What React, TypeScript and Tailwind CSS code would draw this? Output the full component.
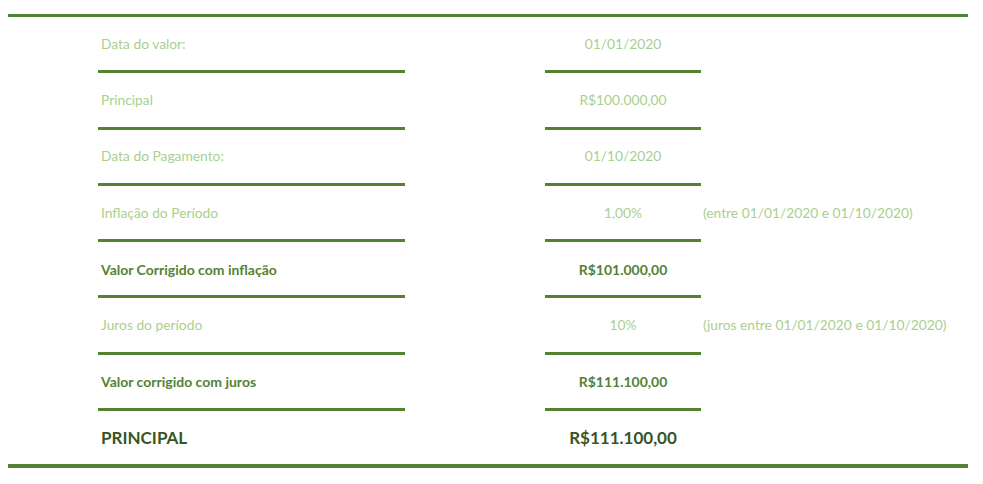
import React from 'react';

interface Row {
  label: string;
  value: string;
  note?: string;
  kind: 'light' | 'bold' | 'total';
}

const rows: Row[] = [
  { label: 'Data do valor:', value: '01/01/2020', kind: 'light' },
  { label: 'Principal', value: 'R$100.000,00', kind: 'light' },
  { label: 'Data do Pagamento:', value: '01/10/2020', kind: 'light' },
  { label: 'Inflação do Período', value: '1,00%', note: '(entre 01/01/2020 e 01/10/2020)', kind: 'light' },
  { label: 'Valor Corrigido com inflação', value: 'R$101.000,00', kind: 'bold' },
  { label: 'Juros do período', value: '10%', note: '(juros entre 01/01/2020 e 01/10/2020)', kind: 'light' },
  { label: 'Valor corrigido com juros', value: 'R$111.100,00', kind: 'bold' },
  { label: 'PRINCIPAL', value: 'R$111.100,00', kind: 'total' },
];

const textClass = (kind: Row['kind']) =>
  kind === 'light'
    ? 'text-[#a9d08e] text-[13.8px]'
    : kind === 'bold'
    ? 'text-[#548235] text-[14px] font-bold'
    : 'text-[#375623] text-[17px] font-bold';

const App: React.FC = () => {
  return (
    <div className="w-[983px] h-[484px] bg-white pt-[14px] px-[8px]" style={{ fontFamily: 'Lato, "Open Sans", sans-serif' }}>
      <div className="w-[960px]">
        <div className="h-[3px] bg-[#548235]" />
        {rows.map((row, i) => {
          const last = i === rows.length - 1;
          const line = last ? '' : 'border-b-[3px] border-[#548235]';
          return (
            <div key={i} className="flex">
              <div className={`ml-[90px] w-[307px] ${line}`}>
                <div className={`h-[53.3px] flex items-center pl-[3px] pt-[1px] ${textClass(row.kind)}`}>{row.label}</div>
              </div>
              <div className="w-[140px]" />
              <div className={`w-[156px] ${line}`}>
                <div className={`h-[53.3px] flex items-center justify-center pt-[1px] ${textClass(row.kind)}`}>{row.value}</div>
              </div>
              {row.note && (
                <div className="h-[53.3px] flex items-center pl-[2px] pt-[1px] text-[13.8px] text-[#a9d08e] whitespace-nowrap">{row.note}</div>
              )}
            </div>
          );
        })}
        <div className="h-[3.5px] bg-[#548235]" />
      </div>
    </div>
  );
};

export default App;
